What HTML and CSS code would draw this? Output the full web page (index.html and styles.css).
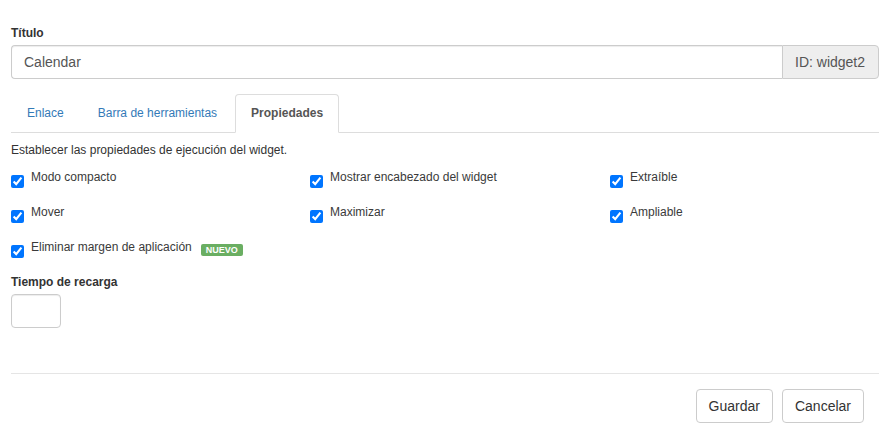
FILE: index.html
```html
<!DOCTYPE html>
<html lang="es">
<head>
<meta charset="utf-8">
<title>Widget</title>
<link rel="stylesheet" href="styles.css">
</head>
<body>
<div class="page">
  <label class="field-label">Título</label>
  <div class="input-group">
    <input class="text-input" type="text" value="Calendar">
    <span class="addon">ID: widget2</span>
  </div>

  <ul class="tabs">
    <li class="tab"><a href="#">Enlace</a></li>
    <li class="tab"><a href="#">Barra de herramientas</a></li>
    <li class="tab active"><a href="#">Propiedades</a></li>
  </ul>

  <div class="tab-content">
    <p class="desc">Establecer las propiedades de ejecución del widget.</p>
    <div class="checks">
      <label class="check"><input type="checkbox" checked><span>Modo compacto</span></label>
      <label class="check"><input type="checkbox" checked><span>Mostrar encabezado del widget</span></label>
      <label class="check"><input type="checkbox" checked><span>Extraíble</span></label>
      <label class="check"><input type="checkbox" checked><span>Mover</span></label>
      <label class="check"><input type="checkbox" checked><span>Maximizar</span></label>
      <label class="check"><input type="checkbox" checked><span>Ampliable</span></label>
      <label class="check"><input type="checkbox" checked><span>Eliminar margen de aplicación</span><span class="badge">NUEVO</span></label>
    </div>

    <label class="field-label reload-label">Tiempo de recarga</label>
    <input class="small-input" type="text">
  </div>

  <div class="footer">
    <button class="btn" type="button">Guardar</button>
    <button class="btn" type="button">Cancelar</button>
  </div>
</div>
</body>
</html>
```

FILE: styles.css
```css
* { box-sizing: border-box; }
html, body { margin: 0; padding: 0; background: #fff; }
body {
  font-family: "Liberation Sans", Arial, sans-serif;
  font-size: 12px;
  line-height: 17px;
  color: #333;
}
.page {
  padding: 25px 8px 0 11px;
}
.field-label {
  display: block;
  font-weight: bold;
  margin-bottom: 3px;
}
.input-group {
  display: flex;
  height: 34px;
}
.text-input {
  flex: 1;
  height: 34px;
  border: 1px solid #ccc;
  border-right: 0;
  border-radius: 4px 0 0 4px;
  padding: 6px 12px;
  font-family: inherit;
  font-size: 14px;
  color: #555;
  outline: none;
  box-shadow: inset 0 1px 1px rgba(0,0,0,.075);
}
.addon {
  display: flex;
  align-items: center;
  padding: 0 12px;
  background: #eee;
  border: 1px solid #ccc;
  border-radius: 0 4px 4px 0;
  font-size: 14px;
  color: #555;
  width: 97px;
}
.tabs {
  list-style: none;
  margin: 15px 0 0;
  padding: 0;
  display: flex;
  border-bottom: 1px solid #ddd;
}
.tab {
  margin-right: 2px;
  margin-bottom: -1px;
}
.tab a {
  display: block;
  padding: 10px 15px;
  border: 1px solid transparent;
  border-radius: 4px 4px 0 0;
  color: #337ab7;
  text-decoration: none;
  line-height: 17px;
}
.tab.active a {
  color: #555;
  font-weight: bold;
  background: #fff;
  border-color: #ddd #ddd transparent;
}
.tab-content {
  padding-top: 9px;
}
.desc {
  margin: 0 0 10px;
}
.checks {
  display: grid;
  grid-template-columns: 299px 300px 1fr;
  row-gap: 18px;
}
.check {
  display: flex;
  align-items: flex-start;
  height: 17px;
  color: #3a3a3a;
}
.check input {
  margin: 6px 7px -2px 0;
  width: 13px;
  height: 13px;
  accent-color: #0075ff;
  flex: none;
}
.badge {
  display: inline-block;
  margin: 5px 0 0 9px;
  height: 12px;
  padding: 0 5px;
  background: #6aae62;
  color: #fff;
  font-size: 9px;
  font-weight: bold;
  line-height: 12px;
  border-radius: 2px;
}
.reload-label {
  margin-top: 18px;
  margin-bottom: 3px;
}
.small-input {
  display: block;
  width: 50px;
  height: 34px;
  border: 1px solid #ccc;
  border-radius: 4px;
  outline: none;
  box-shadow: inset 0 1px 1px rgba(0,0,0,.075);
}
.footer {
  margin-top: 45px;
  border-top: 1px solid #e5e5e5;
  padding: 15px 15px 0 0;
  display: flex;
  justify-content: flex-end;
  gap: 9px;
}
.btn {
  height: 34px;
  padding: 6px 12px;
  background: #fff;
  border: 1px solid #ccc;
  border-radius: 4px;
  font-family: inherit;
  font-size: 14px;
  color: #333;
}
```
